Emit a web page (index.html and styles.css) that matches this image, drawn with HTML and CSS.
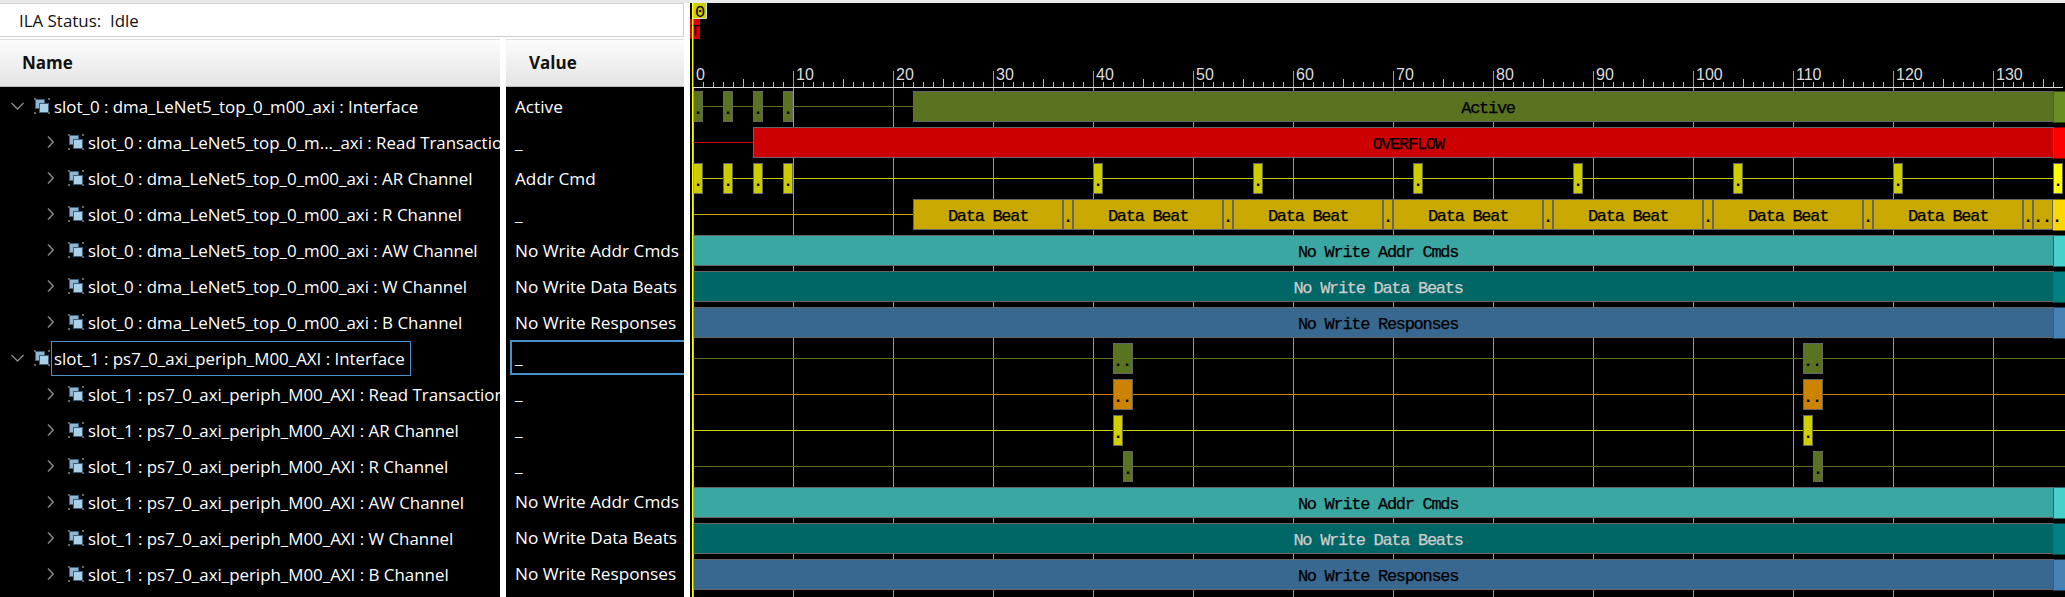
FILE: index.html
```html
<!DOCTYPE html>
<html lang="en">
<head>
    <meta charset="UTF-8">
    <meta name="viewport" content="width=device-width, initial-scale=1.0">
    <title>ILA Waveform</title>
    <link rel="stylesheet" href="styles.css">
</head>
<body>
    <div id="window">
        <div id="signals">
            <div id="status">ILA Status:&nbsp; Idle</div>
            <div id="columns">
                <div class="column name-column">
                    <div class="column-header">Name</div>
                    <div class="column-body" id="name-rows"></div>
                </div>
                <div class="column value-column">
                    <div class="column-header">Value</div>
                    <div class="column-body" id="value-rows"></div>
                </div>
            </div>
        </div>
        <div id="waves"></div>
    </div>
    <script src="waves.js"></script>
</body>
</html>
```
FILE: styles.css
```css
html, body {
    margin: 0;
    height: 100%;
    overflow: hidden;
}
body {
    background-color: #e8e8e8;
    font-family: "Open Sans", "Noto Sans", sans-serif;
}
#window {
    display: flex;
    height: 594px;
    margin-top: 3px;
    background-color: #fff;
}
#signals {
    width: 684px;
    flex: none;
    display: flex;
    flex-direction: column;
}
#status {
    height: 34px;
    line-height: 34px;
    padding-left: 19px;
    font-size: 16.9px;
    box-sizing: border-box;
    border: 1px solid #cfcfcf;
    border-left: none;
    color: #111;
}
#columns {
    display: flex;
    gap: 6px;
    margin-top: 2px;
    flex: 1;
    min-height: 0;
}
.column {
    display: flex;
    flex-direction: column;
    overflow: hidden;
}
.name-column {
    width: 500px;
}
.value-column {
    width: 178px;
}
.column-header {
    height: 48px;
    line-height: 46px;
    box-sizing: border-box;
    flex: none;
    font-weight: 700;
    font-size: 17px;
    color: #111;
    background: linear-gradient(#fcfcfc, #e4e4e4);
    border-bottom: 1px solid #bbb;
    border-top: 1px solid #ddd;
}
.name-column .column-header {
    padding-left: 22px;
}
.value-column .column-header {
    padding-left: 23px;
}
.column-body {
    flex: 1;
    background-color: #000;
    padding-top: 1px;
}
.row {
    height: 36px;
    display: flex;
    align-items: center;
    color: #fff;
    font-size: 16.9px;
    white-space: nowrap;
    box-sizing: border-box;
}
.row.child {
    padding-left: 47px;
}
.row.parent {
    padding-left: 11px;
}
.chevron {
    flex: none;
    width: 13px;
    height: 14px;
}
.row.parent .chevron {
    margin-right: 10px;
}
.row.child .chevron {
    width: 7px;
    margin-right: 14px;
}
.signal-icon {
    flex: none;
    width: 16px;
    height: 16px;
    margin-right: 4px;
}
.row-label {
    box-sizing: border-box;
    height: 35px;
    line-height: 33px;
    padding: 0 5px 0 2px;
    border: 1px solid transparent;
    margin-left: -3px;
}
.row.selected .row-label {
    border-color: #4a90c8;
}
.value-row {
    padding-left: 9px;
    font-size: 17.2px;
}
.value-row.selected {
    margin-left: 4px;
    padding-left: 3px;
    border: 2px solid #4a90c8;
    border-right: none;
    height: 35px;
}
#waves {
    flex: 1;
    min-width: 0;
    background-color: #000;
    margin-left: 6px;
}
#waves svg {
    display: block;
}
.ruler-label {
    font-family: "Liberation Sans", sans-serif;
    font-size: 16px;
    fill: #ddd;
}
.bar-label {
    font-family: "Liberation Mono", monospace;
    font-size: 17px;
    letter-spacing: -1.3px;
    text-anchor: middle;
    fill: #000;
    stroke: #000;
    stroke-width: 0.25px;
}
.bar-label.light {
    fill: #ccc;
    stroke: #ccc;
}
.bar-dot {
    font-family: "Liberation Mono", monospace;
    font-size: 16px;
    font-weight: 700;
    text-anchor: middle;
    fill: #000;
}
.marker-label {
    font-family: "Liberation Mono", monospace;
    font-size: 17px;
    fill: #000;
}
```
FILE: waves.js
```js
// left panel rows, then the waveform drawn on one svg
const rows = [
    { name: 'slot_0 : dma_LeNet5_top_0_m00_axi : Interface', value: 'Active', parent: true },
    { name: 'slot_0 : dma_LeNet5_top_0_m..._axi : Read Transactions', value: '_' },
    { name: 'slot_0 : dma_LeNet5_top_0_m00_axi : AR Channel', value: 'Addr Cmd' },
    { name: 'slot_0 : dma_LeNet5_top_0_m00_axi : R Channel', value: '_' },
    { name: 'slot_0 : dma_LeNet5_top_0_m00_axi : AW Channel', value: 'No Write Addr Cmds' },
    { name: 'slot_0 : dma_LeNet5_top_0_m00_axi : W Channel', value: 'No Write Data Beats' },
    { name: 'slot_0 : dma_LeNet5_top_0_m00_axi : B Channel', value: 'No Write Responses' },
    { name: 'slot_1 : ps7_0_axi_periph_M00_AXI : Interface', value: '_', parent: true, selected: true },
    { name: 'slot_1 : ps7_0_axi_periph_M00_AXI : Read Transactions', value: '_' },
    { name: 'slot_1 : ps7_0_axi_periph_M00_AXI : AR Channel', value: '_' },
    { name: 'slot_1 : ps7_0_axi_periph_M00_AXI : R Channel', value: '_' },
    { name: 'slot_1 : ps7_0_axi_periph_M00_AXI : AW Channel', value: 'No Write Addr Cmds' },
    { name: 'slot_1 : ps7_0_axi_periph_M00_AXI : W Channel', value: 'No Write Data Beats' },
    { name: 'slot_1 : ps7_0_axi_periph_M00_AXI : B Channel', value: 'No Write Responses' }
];

const iconSvg = `<svg class="signal-icon" viewBox="0 0 16 16">
    <rect x="1.5" y="1.5" width="9" height="9" fill="#8fb6d0" stroke="#3f6178"/>
    <rect x="5.5" y="5.5" width="9" height="9" fill="#a9d0e6" stroke="#3f6178"/>
    <path d="M0 0h2v2h-2zM14 0h2v2h-2zM0 14h2v2h-2zM14 14h2v2h-2z" fill="#666"/>
</svg>`;
const downSvg = '<svg class="chevron" viewBox="0 0 13 14"><path d="M0.5 4l6 6 6-6" stroke="#8a8a8a" stroke-width="1.4" fill="none"/></svg>';
const rightSvg = '<svg class="chevron" viewBox="0 0 7 14"><path d="M1 1.5l5.2 5.5-5.2 5.5" stroke="#8a8a8a" stroke-width="1.4" fill="none"/></svg>';

const nameRows = document.getElementById('name-rows');
const valueRows = document.getElementById('value-rows');

rows.forEach(row => {
    const nameRow = document.createElement('div');
    nameRow.className = 'row ' + (row.parent ? 'parent' : 'child') + (row.selected ? ' selected' : '');
    nameRow.innerHTML = (row.parent ? downSvg : rightSvg) + iconSvg;
    const label = document.createElement('span');
    label.className = 'row-label';
    label.textContent = row.name;
    nameRow.appendChild(label);
    nameRows.appendChild(nameRow);

    const valueRow = document.createElement('div');
    valueRow.className = 'row value-row' + (row.selected ? ' selected' : '');
    valueRow.textContent = row.value;
    valueRows.appendChild(valueRow);
});

// waveform. waves starts at x=690 on the page, sample 0 sits 3px in, 10px per sample
const NS = 'http://www.w3.org/2000/svg';
const WIDTH = 1375;
const HEIGHT = 594;
const TOP = 3;
const S0 = 3;
const CURSOR = 136;
const END = WIDTH;

const OLIVE = ['#5a7320', '#6b8e23'];
const RED = ['#cc0000', '#ff0000'];
const YELLOW = ['#cccc00', '#ffff00'];
const GOLD = ['#c9a800', '#ffd700'];
const TEAL = ['#3aa7a3', '#48d1cc'];
const DARK = ['#006666', '#008080'];
const BLUE = ['#386890', '#4682b4'];
const ORANGE = ['#cc8400', '#ffa500'];

const svg = document.createElementNS(NS, 'svg');
svg.setAttribute('width', WIDTH);
svg.setAttribute('height', HEIGHT);

function add(tag, attrs, text) {
    const el = document.createElementNS(NS, tag);
    Object.keys(attrs).forEach(key => el.setAttribute(key, attrs[key]));
    if (text) el.textContent = text;
    svg.appendChild(el);
    return el;
}

function sx(sample) {
    return S0 + sample * 10;
}

function rowCenter(index) {
    return 106.5 - TOP + index * 36;
}

function hline(x1, x2, y, color) {
    add('rect', { x: x1, y: Math.floor(y), width: x2 - x1, height: 1, fill: color });
}

// one bar between two samples, with its dots or its label
function bar(index, from, to, color, label, light) {
    const mid = rowCenter(index);
    const x = sx(from);
    const w = Math.min(sx(to), END) - x;
    add('rect', { x: x + 0.5, y: mid - 15, width: w - 1, height: 30, fill: color, stroke: '#666', 'stroke-width': 1 });
    if (label) {
        add('text', { x: x + w / 2, y: mid + 6, class: 'bar-label' + (light ? ' light' : '') }, label);
    } else {
        for (let i = 0; i < to - from; i++) {
            add('text', { x: x + 5 + i * 9, y: mid + 7, class: 'bar-dot' }, '.');
        }
    }
}

// full-width bar: darker before the cursor, bright after it
function longBar(index, from, pal, label, light) {
    const mid = rowCenter(index);
    const x = sx(from);
    const cut = sx(CURSOR);
    add('rect', { x: x + 0.5, y: mid - 15, width: cut - x, height: 30, fill: pal[0], stroke: '#666', 'stroke-width': 1 });
    add('rect', { x: cut, y: mid - 15, width: END - cut, height: 31, fill: pal[1] });
    add('rect', { x: cut, y: mid - 15, width: 1, height: 31, fill: '#555' });
    add('text', { x: (x + END) / 2 - 1, y: mid + 6, class: 'bar-label' + (light ? ' light' : '') }, label);
}

// vertical grid under the bars
for (let s = 0; s <= 130; s += 10) {
    add('rect', { x: sx(s), y: s === 0 ? 85 : 68, width: 1, height: HEIGHT, fill: '#999' });
}

// ruler
hline(S0, WIDTH - 2, 84, '#ddd');
for (let s = 0; s <= 136; s++) {
    if (s % 10 === 0) continue;
    const tall = s % 5 === 0;
    add('rect', { x: sx(s), y: tall ? 76 : 79, width: 1, height: tall ? 8 : 5, fill: '#bbb' });
}
for (let s = 0; s <= 130; s += 10) {
    add('text', { x: sx(s) + 3, y: 77, class: 'ruler-label' }, String(s));
}

// row 0, interface
hline(S0, sx(22), rowCenter(0), OLIVE[0]);
[0, 3, 6, 9].forEach(s => bar(0, s, s + 1, OLIVE[0]));
longBar(0, 22, OLIVE, 'Active');

// row 1, read transactions
hline(S0, sx(6), rowCenter(1), RED[0]);
longBar(1, 6, RED, 'OVERFLOW');

// row 2, address commands
hline(S0, sx(136), rowCenter(2), YELLOW[0]);
[0, 3, 6, 9, 40, 56, 72, 88, 104, 120].forEach(s => bar(2, s, s + 1, YELLOW[0]));
bar(2, 136, 137, YELLOW[1]);

// row 3, data beats
hline(S0, sx(22), rowCenter(3), GOLD[0]);
bar(3, 22, 37, GOLD[0], 'Data Beat');
bar(3, 37, 38, GOLD[0]);
for (let s = 38; s < 134; s += 16) {
    bar(3, s, s + 15, GOLD[0], 'Data Beat');
    bar(3, s + 15, s + 16, GOLD[0]);
}
bar(3, 134, 136, GOLD[0]);
add('rect', { x: sx(136), y: rowCenter(3) - 15, width: END - sx(136), height: 31, fill: GOLD[1] });
add('text', { x: sx(136) + 4, y: rowCenter(3) + 7, class: 'bar-dot' }, '.');

// rows 4-6 and 11-13, the idle write channels
[4, 11].forEach(first => {
    longBar(first, 0, TEAL, 'No Write Addr Cmds');
    longBar(first + 1, 0, DARK, 'No Write Data Beats', true);
    longBar(first + 2, 0, BLUE, 'No Write Responses');
});

// rows 7-10, slot 1
[[7, OLIVE, 42, 44], [8, ORANGE, 42, 44], [9, ['#d0d000', '#ffff00'], 42, 43], [10, OLIVE, 43, 44]].forEach(r => {
    hline(S0, WIDTH, rowCenter(r[0]), r[1][0]);
    bar(r[0], r[2], r[3], r[1][0]);
    bar(r[0], r[2] + 69, r[3] + 69, r[1][0]);
});

// cursor and markers go on top
add('rect', { x: 3, y: 0, width: 13, height: 16, fill: '#cccc00' });
add('path', { d: 'M3 15.5h13.5V0', stroke: '#ddd', 'stroke-width': 1, fill: 'none' });
add('text', { x: 5, y: 13.5, class: 'marker-label' }, '0');
add('rect', { x: 0, y: 16, width: 10, height: 20, fill: '#dd0000' });
add('text', { x: 0, y: 33, class: 'marker-label' }, 'T');
add('rect', { x: 2, y: 0, width: 1.4, height: HEIGHT, fill: '#ffff00' });

document.getElementById('waves').appendChild(svg);
```
